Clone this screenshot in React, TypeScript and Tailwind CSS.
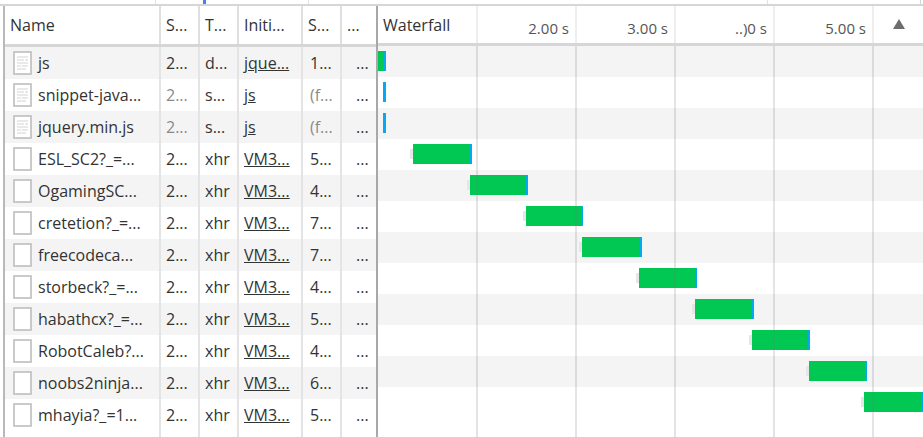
const cols = ["w-[156px]", "w-[39px]", "w-[39px]", "w-[64px]", "w-[39px]", "w-[35px]"];

type Row = { name: string; a: string; t: string; i: string; s: string; kind: "doc" | "blank"; dim?: boolean; bar: number[] };

const rows: Row[] = [
  { name: "js", a: "2...", t: "d...", i: "jque...", s: "1...", kind: "doc", bar: [2, 6, 2] },
  { name: "snippet-java...", a: "2...", t: "s...", i: "js", s: "(f...", kind: "doc", dim: true, bar: [7, 0, 3] },
  { name: "jquery.min.js", a: "2...", t: "s...", i: "js", s: "(f...", kind: "doc", dim: true, bar: [7, 0, 3] },
  { name: "ESL_SC2?_=...", a: "2...", t: "xhr", i: "VM3...", s: "5...", kind: "blank", bar: [37, 57, 2] },
  { name: "OgamingSC...", a: "2...", t: "xhr", i: "VM3...", s: "4...", kind: "blank", bar: [94, 56, 2] },
  { name: "cretetion?_=...", a: "2...", t: "xhr", i: "VM3...", s: "7...", kind: "blank", bar: [150, 55, 2] },
  { name: "freecodeca...", a: "2...", t: "xhr", i: "VM3...", s: "7...", kind: "blank", bar: [206, 58, 2] },
  { name: "storbeck?_=...", a: "2...", t: "xhr", i: "VM3...", s: "4...", kind: "blank", bar: [263, 56, 2] },
  { name: "habathcx?_=...", a: "2...", t: "xhr", i: "VM3...", s: "5...", kind: "blank", bar: [319, 57, 2] },
  { name: "RobotCaleb?...", a: "2...", t: "xhr", i: "VM3...", s: "4...", kind: "blank", bar: [376, 56, 2] },
  { name: "noobs2ninja...", a: "2...", t: "xhr", i: "VM3...", s: "6...", kind: "blank", bar: [433, 56, 2] },
  { name: "mhayia?_=1...", a: "2...", t: "xhr", i: "VM3...", s: "5...", kind: "blank", bar: [488, 57, 2] },
];

const ticks = [
  { label: "", w: "w-[100px]" },
  { label: "2.00 s", w: "w-[99px]" },
  { label: "3.00 s", w: "w-[99px]" },
  { label: "..)0 s", w: "w-[99px]" },
  { label: "5.00 s", w: "w-[99px]" },
];

function FileIcon({ kind }: { kind: "doc" | "blank" }) {
  return (
    <svg width="19" height="24" viewBox="0 0 19 24" className="shrink-0">
      <rect x="1" y="1" width="17" height="22" fill="#ffffff" stroke="#bdbdbd" strokeWidth="1.6" />
      {kind === "doc" && (
        <g stroke="#e2e2e2" strokeWidth="1.4">
          <path d="M4 6h11M4 9h7M12 9h3M4 12h11M4 15h4M9 15h6M4 18h9" />
        </g>
      )}
    </svg>
  );
}

export default function App() {
  return (
    <div className="w-[923px] h-[437px] overflow-hidden bg-white text-[#333333] text-[16px] flex flex-col" style={{ fontFamily: '"Open Sans", sans-serif' }}>
      <div className="h-[6px] shrink-0 border-b-2 border-[#d6d6d6] flex pl-[3px] pr-[2px]">
        <div className="w-[153px] border-r border-[#e2e2e2]" />
        <div className="w-[153px] border-r border-[#e2e2e2] relative">
          <div className="absolute left-[47px] top-0 w-[3px] h-[4px] bg-[#4a7ff0]" />
        </div>
        <div className="w-[459px] border-r border-[#e2e2e2]" />
        <div className="flex-1 border-r border-[#d6d6d6]" />
      </div>

      <div className="flex-1 min-h-0 flex">
        <div className="w-[376px] shrink-0 ml-[3px] -mr-[3px] border-l-2 border-[#b9b9b9] flex flex-col">
          <div className="h-[41px] shrink-0 flex items-center border-b-[3px] border-[#d6d6d6]">
            {["Name", "S...", "T...", "Initi...", "S...", "..."].map((h, i) => (
              <div key={i} className={`${cols[i]} h-full flex items-center shrink-0 pl-[5px] ${i < 5 ? "border-r-2 border-[#dfdfdf]" : ""}`}>
                {h}
              </div>
            ))}
          </div>
          {rows.map((r, idx) => (
            <div key={idx} className={`h-[32px] shrink-0 flex items-center ${idx % 2 === 0 ? "bg-[#f4f4f4]" : "bg-white"}`}>
              <div className={`${cols[0]} shrink-0 h-full flex items-center pl-[8px] gap-[6px] border-r-2 border-[#e4e4e4]`}>
                <FileIcon kind={r.kind} />
                <span className="whitespace-nowrap">{r.name}</span>
              </div>
              <div className={`${cols[1]} shrink-0 h-full flex items-center pl-[5px] border-r-2 border-[#e4e4e4] ${r.dim ? "text-[#8a8a8a]" : ""}`}>{r.a}</div>
              <div className={`${cols[2]} shrink-0 h-full flex items-center pl-[5px] border-r-2 border-[#e4e4e4]`}>{r.t}</div>
              <div className={`${cols[3]} shrink-0 h-full flex items-center pl-[5px] border-r-2 border-[#e4e4e4] underline`}>{r.i}</div>
              <div className={`${cols[4]} shrink-0 h-full flex items-center pl-[7px] border-r-2 border-[#e4e4e4] ${r.dim ? "text-[#8a8a8a]" : ""}`}>{r.s}</div>
              <div className={`${cols[5]} shrink-0 h-full flex items-center pl-[14px]`}>...</div>
            </div>
          ))}
          <div className="flex-1 min-h-0 flex">
            {cols.map((c, i) => (
              <div key={i} className={`${c} shrink-0 ${i < 5 ? "border-r-2 border-[#e4e4e4]" : ""}`} />
            ))}
          </div>
        </div>

        <div className="flex-1 min-w-0 border-l-2 border-[#a8a8a8] flex flex-col relative overflow-hidden">
          <div className="h-[40px] shrink-0 flex border-b-[3px] border-[#d6d6d6] relative z-10 bg-white">
            {ticks.map((t, i) => (
              <div key={i} className={`${t.w} shrink-0 border-r-2 border-[#eeeeee] flex items-center justify-end pr-[6px] pt-[7px] text-[15px] text-[#555555]`}>
                {t.label}
              </div>
            ))}
            <div className="flex-1 flex items-center justify-center pb-[2px]">
              <svg width="12" height="10" viewBox="0 0 12 10"><path d="M6 0 12 10H0Z" fill="#6e6e6e" /></svg>
            </div>
            <div className="absolute left-[5px] top-[7px]">Waterfall</div>
          </div>
          <div className="flex-1 min-h-0 flex flex-col">
            {rows.map((r, idx) => (
              <div key={idx} className={`h-[31px] shrink-0 relative ${idx % 2 === 0 ? "bg-[#f4f4f4]" : "bg-white"}`}>
                <div className="absolute top-[5px] h-[20px] flex items-center" style={{ left: r.bar[0] - 2 }}>
                  {r.bar[1] > 10 && <div className="absolute -left-[3px] w-[3px] h-[10px] bg-[#e6e6e6]" />}
                  <div className="h-full bg-[#00c853]" style={{ width: r.bar[1] }} />
                  <div className="h-full bg-[#03a9f4]" style={{ width: r.bar[2] }} />
                </div>
              </div>
            ))}
          </div>
          {[98, 197, 296, 395, 494].map((x) => (
            <div key={x} className="absolute top-[40px] bottom-0 w-[2px] bg-[#7a7a7a]/20" style={{ left: x }} />
          ))}
        </div>
      </div>
    </div>
  );
}
